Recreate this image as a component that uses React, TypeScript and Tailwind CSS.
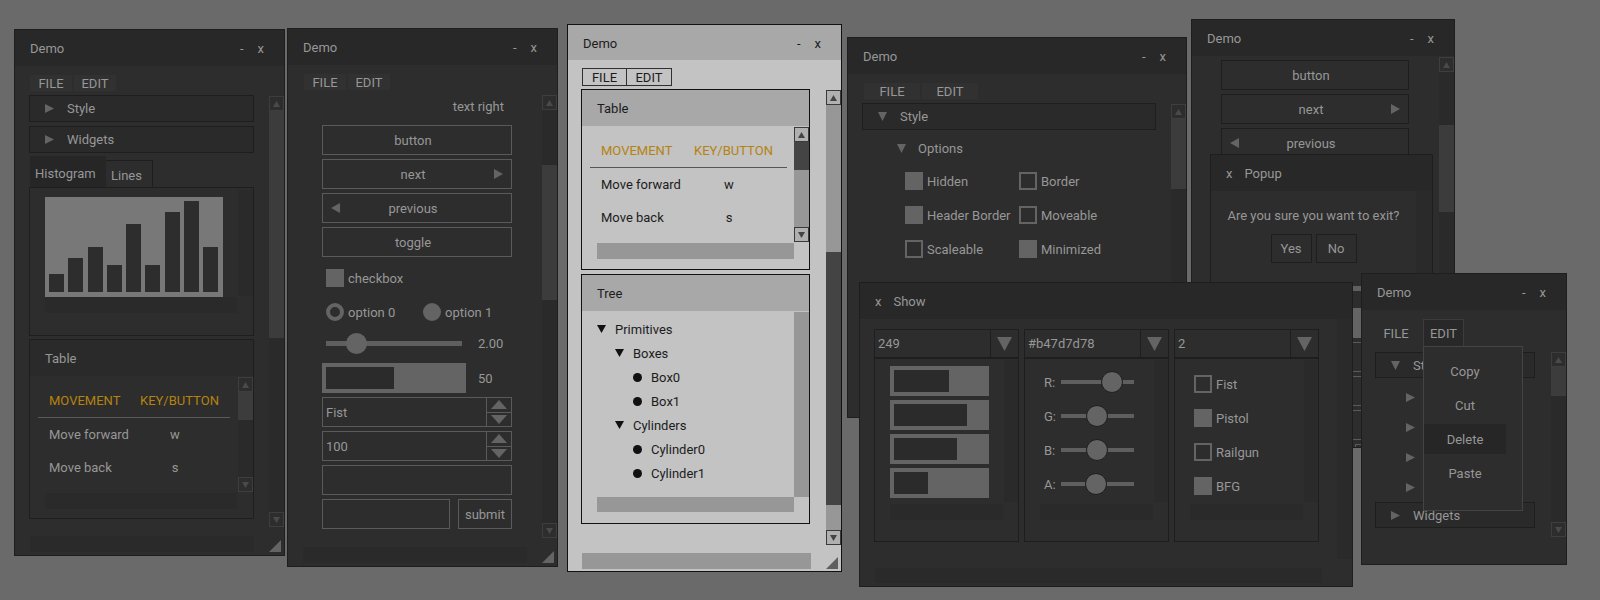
import React from "react";

type Dir = "u" | "d" | "l" | "r";

function Tri({ d, w, h, c, className = "" }: { d: Dir; w: number; h: number; c: string; className?: string }) {
  const p =
    d === "r"
      ? `0,0 ${w},${h / 2} 0,${h}`
      : d === "l"
      ? `${w},0 0,${h / 2} ${w},${h}`
      : d === "d"
      ? `0,0 ${w},0 ${w / 2},${h}`
      : `0,${h} ${w / 2},0 ${w},${h}`;
  return (
    <svg width={w} height={h} className={`block shrink-0 ${className}`}>
      <polygon points={p} fill={c} />
    </svg>
  );
}

function Grip({ c, className = "" }: { c: string; className?: string }) {
  return (
    <svg width={12} height={12} className={`block shrink-0 ${className}`}>
      <polygon points="12,0 12,12 0,12" fill={c} />
    </svg>
  );
}

function Win({ cls, light, children }: { cls: string; light?: boolean; children: React.ReactNode }) {
  return (
    <div
      className={`absolute flex flex-col overflow-hidden border ${
        light ? "border-[#111111] bg-[#c3c3c3] text-[#1c1c1c]" : "border-[#1e1e1e] bg-[#2d2d2d] text-[#979797]"
      } ${cls}`}
    >
      {children}
    </div>
  );
}

function Head({ title, light, cls = "h-[36px]" }: { title: string; light?: boolean; cls?: string }) {
  return (
    <div className={`shrink-0 flex items-center pl-[15px] pr-[20px] pt-px ${light ? "bg-[#a8a8a8]" : "bg-[#282828]"} ${cls}`}>
      <span className="flex-1">{title}</span>
      <span>-</span>
      <span className="ml-[14px]">x</span>
    </div>
  );
}

function Menu({ cls, w = "w-[42px]" }: { cls: string; w?: string }) {
  return (
    <div className={`flex gap-[2px] h-[16px] shrink-0 ${cls}`}>
      <div className={`${w} bg-[#313131] flex items-center justify-center`}>FILE</div>
      <div className={`${w} bg-[#313131] flex items-center justify-center`}>EDIT</div>
    </div>
  );
}

function SBtn({ d, light }: { d: Dir; light?: boolean }) {
  return (
    <div
      className={`h-[15px] shrink-0 border flex items-center justify-center ${
        light ? "border-[#3a3a3a] bg-[#b0b0b0]" : "border-[#3e3e3e] bg-[#2d2d2d]"
      }`}
    >
      <Tri d={d} w={7} h={6} c={light ? "#444444" : "#4a4a4a"} />
    </div>
  );
}

function VScroll({ cls, pre, thumb, light }: { cls: string; pre: string; thumb: string; light?: boolean }) {
  return (
    <div className={`w-[15px] shrink-0 flex flex-col ${light ? "bg-[#979797]" : "bg-[#2a2a2a]"} ${cls}`}>
      <SBtn d="u" light={light} />
      <div className={`shrink-0 ${pre}`} />
      <div className={`shrink-0 ${light ? "bg-[#444444]" : "bg-[#3c3c3c]"} ${thumb}`} />
      <div className="flex-1" />
      <SBtn d="d" light={light} />
    </div>
  );
}

function Foot({ cls, bw, light }: { cls: string; bw: string; light?: boolean }) {
  return (
    <div className={`h-[16px] shrink-0 flex items-end ${cls}`}>
      <div className={`h-[16px] ${bw} ${light ? "bg-[#979797]" : "bg-[#2a2a2a]"}`} />
      <div className="flex-1" />
      <Grip c={light ? "#5f5f5f" : "#646464"} className="mr-[3px]" />
    </div>
  );
}

function TabHead({ label, open, cls }: { label: string; open?: boolean; cls: string }) {
  return (
    <div className={`shrink-0 border border-[#1e1e1e] bg-[#2a2a2a] flex items-center pl-[15px] ${cls}`}>
      <Tri d={open ? "d" : "r"} w={9} h={9} c="#646464" />
      <span className="ml-[13px]">{label}</span>
    </div>
  );
}

function Check({ on }: { on?: boolean }) {
  return on ? (
    <div className="w-[18px] h-[18px] shrink-0 bg-[#646464]" />
  ) : (
    <div className="w-[18px] h-[18px] shrink-0 border-2 border-[#646464]" />
  );
}

function CheckRow({ on, label }: { on?: boolean; label: string }) {
  return (
    <div className="h-[18px] flex items-center">
      <Check on={on} />
      <span className="ml-[4px] whitespace-nowrap">{label}</span>
    </div>
  );
}

function TableGroup({ light, cls, c1, lw }: { light?: boolean; cls: string; c1: string; lw: string }) {
  return (
    <div className={`shrink-0 border flex flex-col ${light ? "border-[#111111]" : "border-[#1e1e1e]"} ${cls}`}>
      <div className={`h-[36px] shrink-0 flex items-center pl-[15px] ${light ? "bg-[#a8a8a8]" : "bg-[#2a2a2a]"}`}>Table</div>
      <div className="flex">
        <div className="flex-1 flex flex-col">
          <div className="mt-[7px] h-[34px] flex items-center pl-[19px] text-[#b5820f]">
            <span className={c1}>MOVEMENT</span>
            <span>KEY/BUTTON</span>
          </div>
          <div className={`ml-[8px] h-px ${lw} ${light ? "bg-[#555555]" : "bg-[#5a5a5a]"}`} />
          <div className="h-[32px] flex items-center pl-[19px]">
            <span className={c1}>Move forward</span>
            <span className="w-[70px] text-center">w</span>
          </div>
          <div className="h-[34px] flex items-center pl-[19px]">
            <span className={c1}>Move back</span>
            <span className="w-[70px] text-center">s</span>
          </div>
          <div className={`mt-[9px] ml-[15px] h-[16px] ${lw} ${light ? "bg-[#979797]" : "bg-[#2a2a2a]"}`} />
        </div>
        <VScroll light={light} cls="mt-px h-[115px]" pre="h-0" thumb="h-[28px]" />
      </div>
    </div>
  );
}

function Btn({ children, dk, cls = "" }: { children?: React.ReactNode; dk?: boolean; cls?: string }) {
  return (
    <div
      className={`relative h-[30px] shrink-0 border flex items-center justify-center pr-[8px] ${
        dk ? "border-[#1e1e1e]" : "border-[#5a5a5a]"
      } ${cls}`}
    >
      {children}
    </div>
  );
}

function Prop({ v }: { v: string }) {
  return (
    <div className="mt-[4px] h-[30px] shrink-0 border border-[#5a5a5a] flex">
      <div className="flex-1 flex items-center pl-[3px]">{v}</div>
      <div className="w-[25px] border-l border-[#5a5a5a] flex flex-col">
        <div className="flex-1 border-b border-[#5a5a5a] flex items-center justify-center">
          <Tri d="u" w={16} h={9} c="#646464" />
        </div>
        <div className="flex-1 flex items-center justify-center">
          <Tri d="d" w={16} h={9} c="#646464" />
        </div>
      </div>
    </div>
  );
}

function Widgets({ dk, first, gap }: { dk?: boolean; first: string; gap: string }) {
  return (
    <>
      <Btn dk={dk} cls={first}>button</Btn>
      <Btn dk={dk} cls="mt-[4px]">
        next
        <Tri d="r" w={9} h={10} c="#646464" className="absolute right-[8px] top-[9px]" />
      </Btn>
      <Btn dk={dk} cls="mt-[4px]">
        <Tri d="l" w={9} h={10} c="#646464" className="absolute left-[8px] top-[9px]" />
        previous
      </Btn>
      <Btn dk={dk} cls="mt-[4px]">toggle</Btn>
      <div className={`h-[18px] flex items-center pl-[4px] ${gap}`}>
        <Check on />
        <span className="ml-[4px]">checkbox</span>
      </div>
      <div className="mt-[16px] h-[18px] flex items-center pl-[4px]">
        <div className="w-[18px] h-[18px] shrink-0 rounded-full border-[4px] border-[#646464]" />
        <span className="ml-[4px] w-[75px]">option 0</span>
        <div className="w-[18px] h-[18px] shrink-0 rounded-full bg-[#646464]" />
        <span className="ml-[4px]">option 1</span>
      </div>
      <div className="mt-[12px] h-[20px] flex items-center">
        <div className="w-[156px] pl-[4px]">
          <div className="relative w-[136px] h-[5px] bg-[#5f5f5f]">
            <div className="absolute left-[20px] top-[-8px] w-[21px] h-[21px] rounded-full bg-[#646464]" />
          </div>
        </div>
        <span>2.00</span>
      </div>
      <div className="mt-[10px] h-[30px] flex items-center">
        <div className="w-[156px]">
          <div className="w-[144px] h-[30px] bg-[#646464] p-[4px]">
            <div className="w-[68px] h-full bg-[#2b2b2b]" />
          </div>
        </div>
        <span>50</span>
      </div>
      <Prop v="Fist" />
      <Prop v="100" />
      <div className="mt-[4px] h-[30px] shrink-0 border border-[#5a5a5a]" />
      <div className="mt-[4px] h-[30px] shrink-0 flex gap-[8px]">
        <div className="w-[130px] border border-[#5a5a5a]" />
        <div className="w-[55px] border border-[#5a5a5a] flex items-center justify-center">submit</div>
      </div>
    </>
  );
}

function Combo({ v }: { v: string }) {
  return (
    <div className="h-[29px] shrink-0 border border-[#1e1e1e] flex">
      <div className="flex-1 flex items-center pl-[3px]">{v}</div>
      <div className="w-[28px] border-l border-[#1e1e1e] flex items-center justify-center">
        <Tri d="d" w={15} h={14} c="#646464" />
      </div>
    </div>
  );
}

function Panel({ children }: { children: React.ReactNode }) {
  return (
    <div className="h-[184px] shrink-0 border border-[#1e1e1e] flex flex-col">
      <div className="flex">
        <div className="flex-1 h-[143px]">{children}</div>
        <div className="mt-px w-[14px] h-[142px] bg-[#2a2a2a]" />
      </div>
      <div className="mt-[2px] ml-[15px] w-[113px] h-[16px] bg-[#2a2a2a]" />
    </div>
  );
}

const bars = ["h-[18px]", "h-[34px]", "h-[45px]", "h-[27px]", "h-[68px]", "h-[27px]", "h-[80px]", "h-[91px]", "h-[45px]"];

const fills = ["w-[55px]", "w-[73px]", "w-[63px]", "w-[34px]"];

const rgba = [
  { k: "R:", l: "left-[40px]" },
  { k: "G:", l: "left-[25px]" },
  { k: "B:", l: "left-[25px]" },
  { k: "A:", l: "left-[24px]" },
];

const tree = [
  { pl: "pl-[15px]", dot: false, t: "Primitives" },
  { pl: "pl-[33px]", dot: false, t: "Boxes" },
  { pl: "pl-[51px]", dot: true, t: "Box0" },
  { pl: "pl-[51px]", dot: true, t: "Box1" },
  { pl: "pl-[33px]", dot: false, t: "Cylinders" },
  { pl: "pl-[51px]", dot: true, t: "Cylinder0" },
  { pl: "pl-[51px]", dot: true, t: "Cylinder1" },
];

export default function App() {
  return (
    <div className="relative w-[1600px] h-[600px] overflow-hidden bg-[#6a6a6a] text-[13px] leading-none [font-family:Roboto,sans-serif]">
      {/* window 1: tree + chart + table */}
      <Win cls="left-[14px] top-[29px] w-[271px] h-[527px]">
        <Head title="Demo" />
        <Menu cls="mt-[9px] ml-[15px]" />
        <div className="mt-[4px] h-[432px] flex shrink-0">
          <div className="ml-[14px] w-[225px] flex flex-col">
            <TabHead label="Style" cls="h-[27px]" />
            <TabHead label="Widgets" cls="mt-[4px] h-[27px]" />
            <div className="mt-[3px] h-[31px] flex items-end shrink-0">
              <div className="ml-px h-[31px] w-[76px] bg-[#262626] flex items-center pl-[5px] pt-[3px]">Histogram</div>
              <div className="h-[27px] w-[47px] border-t border-r border-[#1e1e1e] flex items-center pl-[5px] pt-[2px]">Lines</div>
            </div>
            <div className="h-[149px] shrink-0 border border-[#1e1e1e] flex">
              <div className="pl-[15px] pt-[9px]">
                <div className="w-[178px] h-[100px] bg-[#787878] flex items-end gap-[4.25px] pl-[4px] pb-[5px]">
                  {bars.map((b, i) => (
                    <div key={i} className={`w-[15px] shrink-0 bg-[#2d2d2d] ${b}`} />
                  ))}
                </div>
                <div className="w-[192px] h-[16px] bg-[#2a2a2a]" />
              </div>
              <div className="flex-1" />
              <div className="mt-[2px] w-[15px] h-[106px] bg-[#2a2a2a]" />
            </div>
            <TableGroup cls="mt-[3px] h-[180px]" c1="w-[91px]" lw="w-[192px]" />
          </div>
          <div className="flex-1" />
          <VScroll cls="mt-px h-[431px]" pre="h-0" thumb="h-[227px]" />
        </div>
        <Foot cls="mt-[9px] ml-[15px]" bw="w-[224px]" />
      </Win>

      {/* window 2: widgets */}
      <Win cls="left-[287px] top-[28px] w-[271px] h-[539px]">
        <Head title="Demo" />
        <Menu cls="mt-[9px] ml-[16px]" />
        <div className="mt-[5px] h-[443px] flex shrink-0">
          <div className="ml-[34px] w-[190px] flex flex-col">
            <div className="h-[23px] shrink-0 flex items-center justify-end pr-[8px]">text right</div>
            <Widgets first="mt-[7px]" gap="mt-[12px]" />
          </div>
          <div className="flex-1" />
          <VScroll cls="h-[443px]" pre="h-[55px]" thumb="h-[135px]" />
        </div>
        <Foot cls="mt-[9px] ml-[15px]" bw="w-[224px]" />
      </Win>

      {/* window 3: light theme */}
      <Win light cls="left-[567px] top-[24px] w-[275px] h-[548px]">
        <Head light title="Demo" cls="h-[35px]" />
        <div className="mt-[8px] ml-[14px] h-[18px] flex shrink-0">
          <div className="w-[45px] border border-[#303030] flex items-center justify-center">FILE</div>
          <div className="-ml-px w-[46px] border border-[#303030] flex items-center justify-center">EDIT</div>
        </div>
        <div className="mt-[3px] h-[456px] flex shrink-0">
          <div className="ml-[13px] w-[229px] flex flex-col">
            <TableGroup light cls="h-[181px]" c1="w-[93px]" lw="w-[197px]" />
            <div className="mt-[4px] h-[250px] shrink-0 border border-[#111111] flex flex-col">
              <div className="h-[36px] shrink-0 bg-[#a8a8a8] flex items-center pl-[15px]">Tree</div>
              <div className="flex">
                <div className="flex-1 flex flex-col pt-[6px]">
                  {tree.map((n) => (
                    <div key={n.t} className={`h-[24px] flex items-center ${n.pl}`}>
                      {n.dot ? (
                        <div className="w-[9px] h-[9px] rounded-full bg-[#111111]" />
                      ) : (
                        <Tri d="d" w={9} h={8} c="#111111" />
                      )}
                      <span className="ml-[9px]">{n.t}</span>
                    </div>
                  ))}
                  <div className="mt-[12px] ml-[15px] w-[197px] h-[15px] bg-[#979797]" />
                </div>
                <div className="mt-px w-[15px] h-[185px] bg-[#979797]" />
              </div>
            </div>
          </div>
          <div className="flex-1" />
          <VScroll light cls="mt-px h-[455px]" pre="h-[147px]" thumb="h-[253px]" />
        </div>
        <Foot light cls="mt-[8px] ml-[14px]" bw="w-[229px]" />
      </Win>

      {/* window 4: style options */}
      <Win cls="left-[847px] top-[37px] w-[340px] h-[381px]">
        <Head title="Demo" />
        <Menu cls="mt-[9px] ml-[16px]" w="w-[56px]" />
        <div className="mt-[4px] flex shrink-0">
          <div className="ml-[14px] w-[294px] flex flex-col">
            <TabHead open label="Style" cls="h-[27px]" />
            <div className="h-[36px] flex items-center pl-[35px]">
              <Tri d="d" w={9} h={9} c="#646464" />
              <span className="ml-[12px]">Options</span>
            </div>
            <div className="mt-[6px] ml-[43px] grid grid-cols-[114px_auto] gap-y-[16px]">
              <CheckRow on label="Hidden" />
              <CheckRow label="Border" />
              <CheckRow on label="Header Border" />
              <CheckRow label="Moveable" />
              <CheckRow label="Scaleable" />
              <CheckRow on label="Minimized" />
            </div>
          </div>
          <div className="flex-1" />
          <VScroll cls="mt-px h-[300px]" pre="h-0" thumb="h-[70px]" />
        </div>
      </Win>

      {/* window 5: scrolled widgets */}
      <Win cls="left-[1191px] top-[19px] w-[264px] h-[429px]">
        <Head title="Demo" />
        <div className="flex shrink-0">
          <div className="ml-[29px] w-[188px] flex flex-col pt-[4px]">
            <Widgets dk first="" gap="mt-[22px]" />
          </div>
          <div className="flex-1" />
          <VScroll cls="mt-px h-[380px]" pre="h-[53px]" thumb="h-[87px]" />
        </div>
      </Win>

      {/* popup */}
      <div className="absolute left-[1210px] top-[154px] w-[223px] h-[128px] border-x border-t border-[#1e1e1e] bg-[#2d2d2d] text-[#979797] flex flex-col">
        <div className="h-[36px] shrink-0 bg-[#282828] flex items-center pl-[15px] pt-px">
          <span>x</span>
          <span className="ml-[12px]">Popup</span>
        </div>
        <div className="flex-1 flex">
          <div className="flex-1 flex flex-col items-center pt-[18px]">
            <div className="whitespace-nowrap">Are you sure you want to exit?</div>
            <div className="mt-[12px] flex gap-[4px]">
              <div className="w-[41px] h-[29px] border border-[#1e1e1e] flex items-center justify-center">Yes</div>
              <div className="w-[41px] h-[29px] border border-[#1e1e1e] flex items-center justify-center">No</div>
            </div>
          </div>
          <div className="w-[16px] bg-[#2a2a2a]" />
        </div>
      </div>

      {/* show window */}
      <Win cls="left-[859px] top-[282px] w-[494px] h-[305px]">
        <div className="h-[36px] shrink-0 bg-[#282828] flex items-center pl-[15px] pt-px">
          <span>x</span>
          <span className="ml-[12px]">Show</span>
        </div>
        <div className="h-[240px] flex shrink-0">
          <div className="ml-[14px] mt-[10px] flex gap-[5px]">
            <div className="w-[145px] flex flex-col">
              <Combo v="249" />
              <Panel>
                <div className="pt-[7px] pl-[15px] flex flex-col gap-[4px]">
                  {fills.map((f, i) => (
                    <div key={i} className="w-[99px] h-[30px] bg-[#646464] p-[4px]">
                      <div className={`h-full bg-[#2b2b2b] ${f}`} />
                    </div>
                  ))}
                </div>
              </Panel>
            </div>
            <div className="w-[145px] flex flex-col">
              <Combo v="#b47d7d78" />
              <Panel>
                <div className="pt-[6px]">
                  {rgba.map((s) => (
                    <div key={s.k} className="h-[34px] flex items-center pl-[19px]">
                      <span className="w-[17px]">{s.k}</span>
                      <div className="relative w-[73px] h-[4px] bg-[#5f5f5f]">
                        <div className={`absolute top-[-9px] w-[22px] h-[22px] rounded-full border border-[#1e1e1e] bg-[#646464] ${s.l}`} />
                      </div>
                    </div>
                  ))}
                </div>
              </Panel>
            </div>
            <div className="w-[145px] flex flex-col">
              <Combo v="2" />
              <Panel>
                <div className="pt-[16px] pl-[19px] flex flex-col gap-[16px]">
                  <CheckRow label="Fist" />
                  <CheckRow on label="Pistol" />
                  <CheckRow label="Railgun" />
                  <CheckRow on label="BFG" />
                </div>
              </Panel>
            </div>
          </div>
          <div className="flex-1" />
          <div className="w-[15px] h-[240px] bg-[#2a2a2a]" />
        </div>
        <div className="mt-[9px] ml-[15px] w-[447px] h-[15px] shrink-0 bg-[#2a2a2a]" />
      </Win>

      {/* window 6: menu open */}
      <Win cls="left-[1361px] top-[273px] w-[206px] h-[292px]">
        <Head title="Demo" />
        <div className="mt-[9px] h-[29px] flex items-center shrink-0">
          <div className="ml-[14px] w-[40px] text-center">FILE</div>
          <div className="ml-[7px] w-[41px] h-full border border-[#3c3c3c] bg-[#282828] flex items-center justify-center">EDIT</div>
        </div>
        <div className="mt-[4px] flex shrink-0">
          <div className="ml-[13px] w-[160px] flex flex-col">
            <TabHead open label="Style" cls="h-[26px]" />
            <div className="mt-[4px]">
              {[0, 1, 2, 3].map((i) => (
                <div key={i} className="h-[30px] flex items-center pl-[31px]">
                  <Tri d="r" w={9} h={9} c="#646464" />
                </div>
              ))}
            </div>
            <TabHead label="Widgets" cls="h-[26px]" />
          </div>
          <div className="flex-1" />
          <VScroll cls="h-[185px]" pre="h-0" thumb="h-[29px]" />
        </div>
      </Win>

      {/* edit menu dropdown */}
      <div className="absolute left-[1423px] top-[346px] w-[100px] h-[165px] border border-[#444444] bg-[#2d2d2d] text-[#979797] pt-[9px] flex flex-col gap-[4px]">
        {["Copy", "Cut", "Delete", "Paste"].map((t) => (
          <div key={t} className={`w-[82px] h-[30px] shrink-0 flex items-center justify-center ${t === "Delete" ? "bg-[#262626]" : ""}`}>
            {t}
          </div>
        ))}
      </div>
    </div>
  );
}
